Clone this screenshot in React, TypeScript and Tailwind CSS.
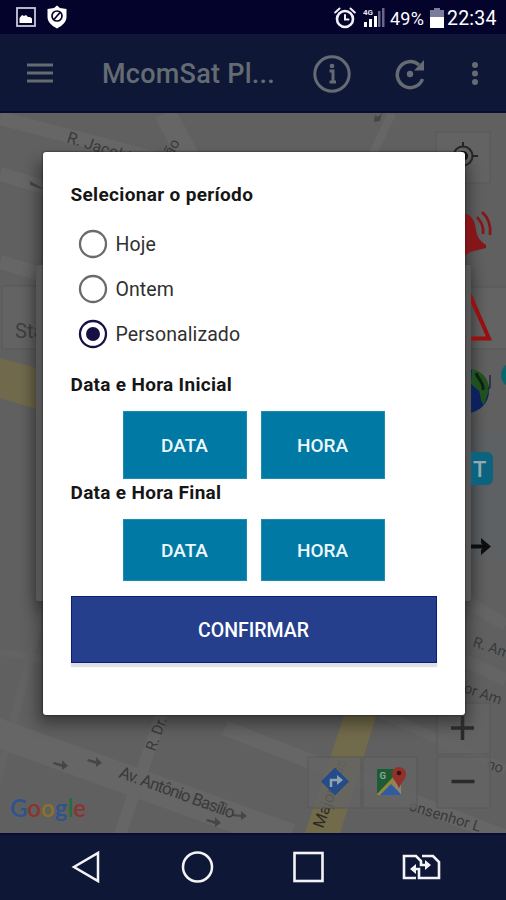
import { useState } from "react";
import type { ReactNode } from "react";

const PERIODS = ["Hoje", "Ontem", "Personalizado"];

function StatusBar() {
  return (
    <div className="flex h-[34px] shrink-0 items-center bg-[#03032b] pl-4 pr-[9px] text-white">
      <svg width="20" height="20" viewBox="0 0 20 20" fill="none">
        <rect x="1" y="1" width="18" height="18" stroke="#c9c9dc" strokeWidth="1.800" />
        <path d="M3.500 16V11L6 8l2 1 2-1 2 2h2l2 1.500V16z" fill="#fff" />
      </svg>
      <svg className="ml-[11px]" width="20" height="24" viewBox="0 0 20 24" fill="none">
        <path d="M10 0.500L13 3l6.500 1v8c0 5-4 8.500-9.500 11.500C4.500 20.500 0.500 17 0.500 12V4L7 3z" fill="#fff" />
        <circle cx="10" cy="11" r="5" stroke="#03032b" strokeWidth="1.700" />
        <path d="M13 7.500l-6 7" stroke="#03032b" strokeWidth="1.700" />
      </svg>
      <svg className="ml-auto mt-[2px]" width="22" height="22" viewBox="0 0 22 22" fill="none" stroke="#f1f1f6" strokeLinecap="round">
        <circle cx="11" cy="12" r="8" strokeWidth="2.600" />
        <path d="M11 8v4.500h3.500" strokeWidth="2" />
        <path d="M1.200 5.500L5.500 1.500M20.800 5.500L16.500 1.500" strokeWidth="2" />
      </svg>
      <svg className="ml-[7px]" width="22" height="21" viewBox="0 0 22 21">
        <text x="0" y="7.500" fontFamily="Roboto, sans-serif" fontSize="8" fontWeight="700" fill="#e4e4ee">4G</text>
        <path d="M1 15h3v5H1zM6 12h3v8H6zM11 9h3v11h-3z" fill="#fff" />
        <path d="M15 4h2.500v16H15zM19 1h2.500v19H19z" fill="#66668c" />
      </svg>
      <span className="ml-[5px] mt-[2px] w-[36px] whitespace-nowrap text-[18px] tracking-[0.200px]">49%</span>
      <svg className="ml-[4px] mt-[1px]" width="14" height="20" viewBox="0 0 14 20">
        <path d="M4 0h6v2h4v7H0V2h4z" fill="#7b7b9d" />
        <path d="M0 9h14v11H0z" fill="#fff" />
      </svg>
      <span className="ml-[3px] mt-[3px] w-[50px] whitespace-nowrap text-[19.500px] tracking-[0.200px]">22:34</span>
    </div>
  );
}

function AppBar() {
  return (
    <header className="flex h-[79px] shrink-0 items-center border-b-2 border-[#070d33] bg-[#0f1736] text-[#656b73]">
      <svg className="ml-[26px]" width="28" height="20" viewBox="0 0 28 20" fill="currentColor">
        <path d="M1 0.500h26v3H1zM1 8.500h26v3H1zM1 16.500h26v3H1z" />
      </svg>
      <h1 className="ml-[48px] mt-[4px] w-[182px] whitespace-nowrap text-[27px] font-medium tracking-[0.250px]">McomSat Pl...</h1>
      <svg className="ml-[29px] mt-[2px]" width="38" height="38" viewBox="0 0 38 38" fill="none">
        <circle cx="19" cy="19" r="17.200" stroke="currentColor" strokeWidth="3" />
        <path d="M16.500 16H20v11M16.500 27h6.500" stroke="currentColor" strokeWidth="3" />
        <circle cx="19" cy="11" r="2.300" fill="currentColor" />
      </svg>
      <svg className="ml-[43px] mt-[2px]" width="32" height="32" viewBox="0 0 32 32" fill="none">
        <path d="M25 7A13 13 0 1 0 28.500 21" stroke="currentColor" strokeWidth="3.500" />
        <path d="M30 2v10.500H20z" fill="currentColor" />
        <circle cx="16" cy="16" r="3.200" fill="currentColor" />
      </svg>
      <svg className="ml-[45px] mt-[2px]" width="8" height="26" viewBox="0 0 8 26" fill="currentColor">
        <circle cx="4" cy="4" r="3" />
        <circle cx="4" cy="12.500" r="3" />
        <circle cx="4" cy="21" r="3" />
      </svg>
    </header>
  );
}

// Map canvas under the dialogs, already dimmed by the scrim
function MapCanvas() {
  return (
    <svg className="absolute inset-0" width="506" height="720" viewBox="0 113 506 720" fill="none" fontFamily="Roboto, sans-serif">
      <defs>
        <filter id="soft" x="-20%" y="-20%" width="140%" height="140%">
          <feGaussianBlur stdDeviation="8" />
        </filter>
        <clipPath id="right-of-card">
          <rect x="471" y="265" width="35" height="340" />
        </clipPath>
      </defs>
      <rect y="113" width="506" height="720" fill="#606060" />

      {/* streets */}
      <g stroke="#666666">
        <path d="M0 118L200 170M0 174L60 192M0 262L50 277" strokeWidth="14" />
        <path d="M165 113L190 160" strokeWidth="22" />
        <path d="M370 160L392 113" strokeWidth="8" />
        <path d="M0 652L60 662M-5 790L45 600" strokeWidth="8" stroke="#636363" />
        <path d="M-10 730L290 838" strokeWidth="29" />
        <path d="M118 840L165 705" strokeWidth="12" />
        <path d="M225 728L520 843" strokeWidth="15" />
        <path d="M330 690L506 770" strokeWidth="10" stroke="#646464" />
        <path d="M464 600L506 625M464 660L506 680" strokeWidth="13" stroke="#646464" />
      </g>
      <path d="M0 358L40 369V410L0 398z" fill="#70694c" />
      <path d="M345 713h32L340 833h-35z" fill="#726b4b" />

      {/* one-way arrows */}
      <g fill="#464646">
        <path d="M54 762l8 2v-4l6 6-6 4v-3l-9-3zM88 759l8 2v-4l6 6-6 4v-3l-9-3zM207 819l8 2v-4l6 6-6 4v-3l-9-3zM233 814l8 1v-4l6 5-6 4v-3l-9-1zM42 188l-12-7v4l12 4z" />
        <path d="M374 122l1-7 3 2 4-4-2 8z" />
      </g>

      <g fill="#3a3a3a">
        <text transform="translate(66 142) rotate(18)" fontSize="16">R. Jacobina</text>
        <text transform="translate(172 157) rotate(-60)" fontSize="15">ão</text>
        <text transform="translate(118 777) rotate(20)" fontSize="17" textLength="122">Av. Antônio Basílio</text>
        <text transform="translate(155 752) rotate(-70)" fontSize="15">R. Dr. J</text>
        <text transform="translate(472 646) rotate(19)" fontSize="14.500">R. Am</text>
        <text transform="translate(463 692) rotate(19)" fontSize="14.500">or Am</text>
        <text transform="translate(408 810) rotate(17)" fontSize="15">onsenhor L</text>
        <text transform="translate(486 768) rotate(19)" fontSize="14.500">no</text>
      </g>
      <text transform="translate(323 829) rotate(-70)" fontSize="16" fill="#2d2a20">Major</text>
      <text transform="translate(341 776) rotate(-70)" fontSize="15" fill="#4f4b3d">us</text>

      {/* map buttons */}
      <g fill="#646464" stroke="#595959" strokeWidth="1" fillOpacity="0.800">
        <rect x="436" y="132" width="54" height="51" />
        <rect x="308" y="757" width="53" height="51" />
        <rect x="363" y="757" width="54" height="51" />
        <rect x="437" y="703" width="53" height="51" />
        <rect x="437" y="757" width="53" height="51" />
        <rect x="2" y="286" width="60" height="63" />
        <rect x="455" y="287" width="52" height="62" />
        <rect x="455" y="430" width="60" height="128" stroke="none" fill="#5d6164" />
      </g>
      <text x="15" y="338" fontSize="20" fill="#404040">Status</text>

      {/* shadows of the two dialogs */}
      <rect x="34" y="272" width="439" height="336" fill="#000" opacity="0.280" filter="url(#soft)" />
      <rect x="38" y="162" width="431" height="562" fill="#000" opacity="0.400" filter="url(#soft)" />

      <g stroke="#242424" strokeWidth="2">
        <circle cx="463" cy="156" r="9.500" />
        <circle cx="463" cy="156" r="5" fill="#111" stroke="none" />
        <path d="M463 142v5M472 156h6M463 165v5" />
      </g>

      {/* alarm bell */}
      <path d="M450 214h17c6 3 8 8 9 16 1 7 4 11 10 15v3l-16 4-5 4h-15z" fill="#84161a" />
      <path d="M477 217c4 5 7 9 6 17M482 212c7 6 9 14 8 23" stroke="#84161a" strokeWidth="2.700" />

      <g clipPath="url(#right-of-card)">
        <path d="M468 291L489 338.500H455" stroke="#970f0f" strokeWidth="4" />
        <circle cx="467" cy="391" r="22" fill="#0c205c" />
        <path d="M472 369c12 3 17 11 17 21l-5 15c-4-3-3-9-5-14l-8-7z" fill="#215020" />
        <path d="M476 373c2 7 8 9 7 17" stroke="#0c220f" strokeWidth="3" />
        <path d="M490 375v12l-2 3" stroke="#222838" strokeWidth="1.500" />
        <circle cx="514" cy="375" r="13" fill="#08666c" />
        <rect x="455" y="452" width="38" height="33" rx="6" fill="#0c6380" />
        <text x="473" y="477" fontSize="22" fontWeight="500" fill="#95a9b1">T</text>
        <path d="M470 546.500h15" stroke="#0d0d0d" strokeWidth="4" />
        <path d="M481 538l10 8.500-10 8.500v-5l3-3.500-3-3.500z" fill="#0d0d0d" />
      </g>

      {/* directions */}
      <path d="M335 768l13.500 13.500-13.500 13.500-13.500-13.500z" fill="#244c89" strokeLinejoin="round" stroke="#244c89" />
      <path d="M331 787v-7h6" stroke="#93a0ae" strokeWidth="2.500" />
      <path d="M337 775l6 5-6 5z" fill="#93a0ae" />

      {/* Google Maps */}
      <path d="M377 769h24v26h-24z" fill="#1b5c34" />
      <path d="M377 794l17-18 7 6v13h-24z" fill="#93853d" />
      <path d="M380 795l11-11 11 11z" fill="#305ba4" />
      <path d="M393 781l4-4 4 14v4z" fill="#888" />
      <text x="379.500" y="779" fontSize="9.500" fontWeight="700" fill="#91a397">G</text>
      <path d="M399 789c-1-6-7-9-7-15a7 7 0 0 1 14 0c0 6-6 9-7 15z" fill="#93302a" />
      <circle cx="399" cy="773" r="2.300" fill="#391211" />

      <path d="M451 728h23M462.500 716v24M451.500 781.500h23" stroke="#2a2a2a" strokeWidth="3.500" />

      <text x="10" y="817" fontFamily="Lato, sans-serif" fontSize="24" fontWeight="600" textLength="76">
        <tspan fill="#2f538e">G</tspan>
        <tspan fill="#8d332f">o</tspan>
        <tspan fill="#8d7328">o</tspan>
        <tspan fill="#2f538e">g</tspan>
        <tspan fill="#266d39">l</tspan>
        <tspan fill="#8d332f">e</tspan>
      </text>

      {/* first dialog, left open behind the period picker */}
      <rect x="36" y="265" width="435" height="336" rx="2" fill="#555555" />
    </svg>
  );
}

function PickerButton({ children, className }: { children: ReactNode; className: string }) {
  return (
    <button
      type="button"
      className={`flex w-[124px] items-center justify-center border border-[#1d8cb1] bg-[#007aa5] pt-[3px] text-[19px] font-medium text-[#eef8fc] ${className}`}
    >
      {children}
    </button>
  );
}

function PeriodDialog() {
  const [period, setPeriod] = useState("Personalizado");

  return (
    <section className="absolute left-[42.500px] top-[39px] flex h-[563px] w-[422px] flex-col rounded-[3px] bg-white px-[28px] pt-[29px] text-[#161616] shadow-[0_0_2px_#111]">
      <h2 className="h-[28px] text-[19px] font-bold leading-[28px] tracking-[0.330px]">Selecionar o período</h2>
      <div className="mt-[12px] flex flex-col">
        {PERIODS.map((name) => (
          <button key={name} type="button" onClick={() => setPeriod(name)} className="flex h-[45px] items-center pl-[7px]">
            <svg width="30" height="30" viewBox="0 0 30 30" fill="none">
              <circle cx="15" cy="15" r="13" stroke={period === name ? "#171044" : "#6b6b6b"} strokeWidth="2.300" />
              {period === name && <circle cx="15" cy="15" r="7" fill="#171044" />}
            </svg>
            <span className="ml-[8px] mt-[2px] text-[19.500px] leading-6 tracking-[0.080px] text-[#303030]">{name}</span>
          </button>
        ))}
      </div>
      <h2 className="mt-[15px] h-[28px] text-[19px] font-bold leading-[28px] tracking-[0.300px]">Data e Hora Inicial</h2>
      <div className="mt-[12px] flex justify-center gap-[14px]">
        <PickerButton className="h-[68px]">DATA</PickerButton>
        <PickerButton className="h-[68px]">HORA</PickerButton>
      </div>
      <h2 className="h-[28px] text-[19px] font-bold leading-[28px] tracking-[0.300px]">Data e Hora Final</h2>
      <div className="mt-[12px] flex justify-center gap-[14px]">
        <PickerButton className="h-[62px]">DATA</PickerButton>
        <PickerButton className="h-[62px]">HORA</PickerButton>
      </div>
      <button
        type="button"
        className="mt-[15px] h-[67px] border border-[#111b7c] bg-[#263f8c] pt-[2px] text-[19.500px] font-medium text-white shadow-[0_4px_1px_#dedee5]"
      >
        CONFIRMAR
      </button>
    </section>
  );
}

function NavBar() {
  return (
    <nav className="flex h-[67px] shrink-0 items-center border-t-2 border-[#070d33] bg-[#0f1736] pb-[2px]">
      <svg className="ml-[71px]" width="30" height="34" viewBox="0 0 30 34" fill="none">
        <path d="M27 3v28L3 17z" stroke="#f4f4f6" strokeWidth="2.500" />
      </svg>
      <svg className="ml-[80px]" width="34" height="34" viewBox="0 0 34 34" fill="none">
        <circle cx="16.500" cy="17" r="14.500" stroke="#f4f4f6" strokeWidth="2.500" />
      </svg>
      <svg className="ml-[77px]" width="33" height="34" viewBox="0 0 33 34" fill="none">
        <rect x="2.500" y="3" width="28" height="28" stroke="#f4f4f6" strokeWidth="2.600" />
      </svg>
      <svg className="ml-[76px]" width="40" height="28" viewBox="0 0 40 28" fill="none" stroke="#f4f4f6" strokeWidth="2.600">
        <path d="M15 25H3V3h12l5 5v4h6M21 3h11l6 6v16H18v-9h-7" />
        <path d="M24 7l6 5-6 5zM15 11l-6 5 6 5z" fill="#f4f4f6" strokeWidth="0" />
      </svg>
    </nav>
  );
}

export default function App() {
  return (
    <div className="flex h-[900px] w-[506px] flex-col overflow-hidden font-[Roboto,sans-serif]">
      <StatusBar />
      <AppBar />
      <main className="relative h-[720px] shrink-0 overflow-hidden">
        <MapCanvas />
        <PeriodDialog />
      </main>
      <NavBar />
    </div>
  );
}
